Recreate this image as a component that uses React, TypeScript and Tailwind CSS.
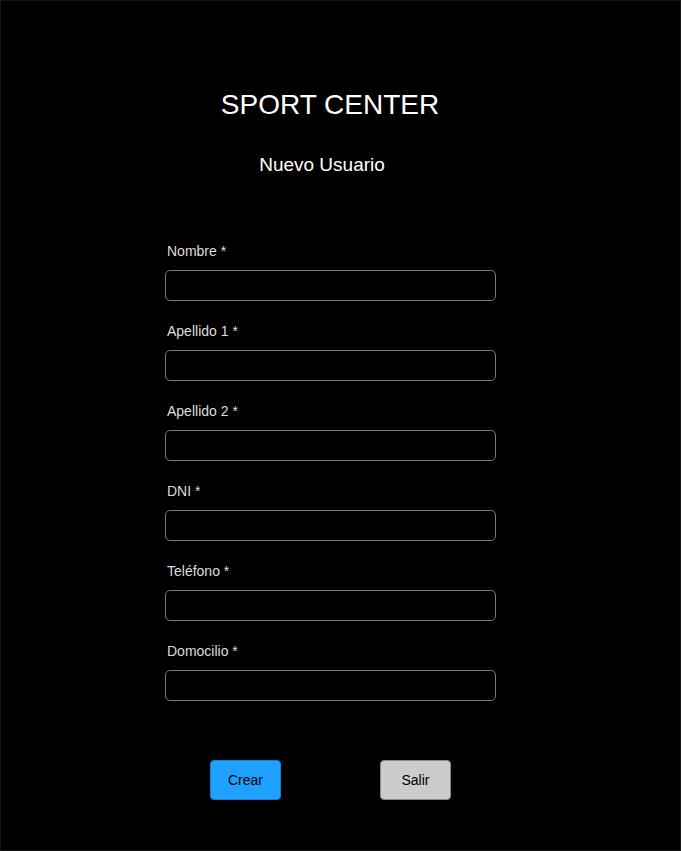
const fields = ['Nombre *', 'Apellido 1 *', 'Apellido 2 *', 'DNI *', 'Teléfono *', 'Domocilio *'];

export default function App() {
  return (
    <div
      className="w-[681px] h-[851px] bg-black border border-[#161616] text-white"
      style={{ fontFamily: '"Liberation Sans", Arial, sans-serif' }}
    >
      <div className="w-[330px] ml-[164px] flex flex-col">
        {/* Header */}
        <h1 className="mt-[88px] text-center text-[28px] leading-[32px] text-white">SPORT CENTER</h1>
        <h2 className="mt-[33px] text-center text-[19px] leading-[22px] text-white -ml-[16px]">Nuevo Usuario</h2>

        {/* Form */}
        <form className="mt-[67px] flex flex-col gap-[22px]">
          {fields.map((label) => (
            <div key={label} className="flex flex-col">
              <label className="ml-[2px] text-[14px] leading-[16px] text-[#dddddd]">{label}</label>
              <input
                type="text"
                className="mt-[11px] h-[31px] w-[331px] rounded-[5px] border border-[#7a7a7a] bg-black px-2 text-white outline-none"
              />
            </div>
          ))}
        </form>

        {/* Actions */}
        <div className="mt-[59px] flex">
          <button className="ml-[45px] h-[40px] w-[71px] rounded-[4px] border border-[#1380d0] bg-[#1ea1ff] text-[14px] text-black">
            Crear
          </button>
          <button className="ml-[99px] h-[40px] w-[71px] rounded-[4px] border border-[#8a8a8a] bg-[#cccccc] text-[14px] text-black">
            Salir
          </button>
        </div>
      </div>
    </div>
  );
}
